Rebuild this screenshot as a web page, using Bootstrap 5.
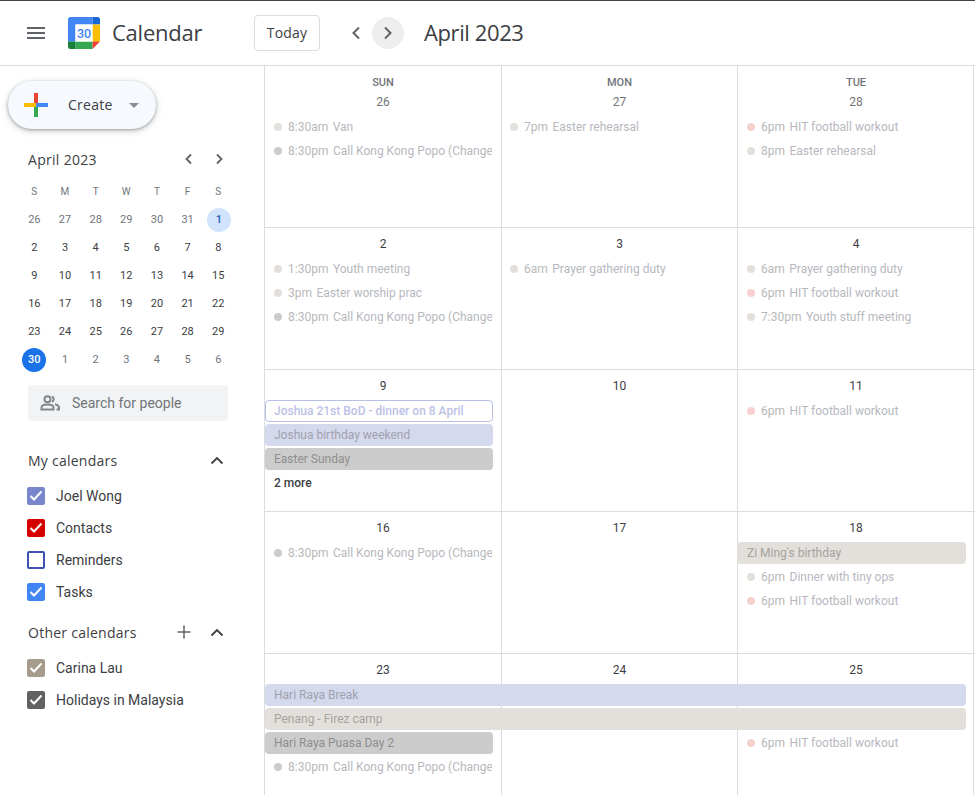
<!DOCTYPE html>
<html lang="en">
<head>
<meta charset="utf-8">
<title>Calendar</title>
<link href="https://cdn.jsdelivr.net/npm/bootstrap@5.3.0/dist/css/bootstrap.min.css" rel="stylesheet">
<style>
html,body{height:795px;overflow:hidden}
body{font-family:Roboto,"Liberation Sans",sans-serif;color:#3c4043;background:#fff;border-top:1px solid #444}
.gs{font-family:"Open Sans",Roboto,sans-serif}
.topbar{height:65px;border-bottom:1px solid #dadce0}
.burger{width:18px;margin:0 23px 0 27px}
.brand-name{font-size:22px;line-height:28px;margin-left:12px;width:142px;letter-spacing:-.25px;padding-bottom:2px}
.today-btn{width:66px;height:36px;padding:0 0 2px;font-size:14px;font-weight:500;color:#3c4043;border:1px solid #dadce0;border-radius:4px;background:#fff;letter-spacing:.2px}
.round-btn{width:32px;height:32px;border-radius:50%;flex:none}
.round-btn.on{background:#eee}
.prev-btn{margin-left:20px}
.cur-month{font-size:22px;line-height:28px;margin-left:20px;letter-spacing:-.4px;padding-bottom:2px}
.main-area{height:729px}
.side{width:265px;flex:none;border-right:1px solid #dadce0;padding-top:15px}
.create-btn{margin-left:8px;width:148px;height:48px;border-radius:24px;background:#f6f9fe;box-shadow:0 1px 3px rgba(60,64,67,.4),0 2px 6px 1px rgba(60,64,67,.18);font-size:14px;font-weight:500;padding-left:15px}
.create-lbl{margin-left:19px;letter-spacing:.25px;padding-bottom:2px}
.caret-dn{width:0;height:0;border:5px solid transparent;border-top-color:#8a8e93;border-bottom:0;margin-left:16px}
.mini-head{margin:20px 0 0 28px;width:198px;height:20px;font-size:14px;font-weight:500;letter-spacing:.3px}
.mini-grid{display:grid;grid-template-columns:repeat(7,30.67px);grid-template-rows:29px;grid-auto-rows:28px;margin:8px 0 0 19px;font-size:11px;font-weight:450;text-align:center}
.mini-grid>span{display:flex;align-items:center;justify-content:center}
.mini-grid>span>b{display:flex;align-items:center;justify-content:center;width:24px;height:24px;border-radius:50%;font-weight:500}
.wd{font-size:10px;color:#70757a}
.out{color:#70757a}
.sel{background:#d2e3fc;color:#185abc;margin-left:1px}
.now{background:#1a73e8;color:#fff}
.people{margin:11px 0 0 28px;width:200px;height:36px;background:#f1f3f4;border-radius:4px;font-size:14px;color:#70757a;padding-left:12px}
.people svg{margin-right:12px}
.sec-head{margin:24px 0 5px 28px;width:196px;height:30px;font-size:14px;font-weight:500;letter-spacing:.25px}
.sec-head.next{margin-top:9px}
.plus-ic{margin-right:18px}
.cal-item{height:32px;padding-left:27px;font-size:14px}
.chk{width:18px;height:18px;border-radius:2px;margin-right:11px;flex:none;display:flex;align-items:center;justify-content:center}
.cal-main{flex:1;min-width:0}
.wk{display:grid;grid-template-columns:236px 236px 237px;grid-template-rows:30px;grid-auto-rows:24px;border-bottom:1px solid #dadce0;height:142px;background:linear-gradient(#dadce0,#dadce0) 236px 0/1px 100% no-repeat,linear-gradient(#dadce0,#dadce0) 472px 0/1px 100% no-repeat,linear-gradient(#dadce0,#dadce0) 708px 0/1px 100% no-repeat;align-content:start}
.wk.first{height:162px;grid-template-rows:50px}
.hd{grid-row:1;font-size:12px;font-weight:450;text-align:center;height:30px;line-height:20px;padding-top:6px;color:#3c4043}
.hd.c2,.hd.c3{padding-left:1px}
.hd.dim{color:#70757a}
.wk.first .hd{height:50px;padding-top:0;line-height:1}
.hd small{display:block;font-size:11px;font-weight:500;color:#70757a;height:21px;line-height:16px;margin:9px 0 0;padding:0}
.ev{height:22px;line-height:22px;font-size:12px;font-weight:450;white-space:nowrap;overflow:hidden;margin:0 8px 2px 0;padding-left:9px;border-radius:4px}
.ev.c3{padding-left:10px}
.ev.timed{display:flex;align-items:center;color:#b7b8c0;margin-right:9px}
.ev.timed i{width:8px;height:8px;border-radius:50%;margin-right:6px;flex:none}
.ev.timed em{font-style:normal;font-weight:400;color:#b8b8b8;margin-right:4.500px}
.tan{background:#e3e0db}.gry{background:#ccc}.pnk{background:#f7d0d0}
.bar-lav{background:#d5d9ee;color:#a0a1ad}
.bar-gry{background:#ccc;color:#8e8e8e}
.bar-tan{background:#e3e0db;color:#a5a4a1}
.bar-out{border:1px solid #b9c0e6;background:#fff;color:#bcc2e6;line-height:20px;padding-left:8px;font-weight:500}
.more{color:#3c4043;background:none;font-weight:500}
.c1{grid-column:1}.c2{grid-column:2}.c3{grid-column:3}.all{grid-column:1/4}
.r2{grid-row:2}.r3{grid-row:3}.r4{grid-row:4}.r5{grid-row:5}
</style>
</head>
<body>
<header class="topbar d-flex align-items-center">
  <svg class="burger" width="18" height="12" viewBox="0 0 18 12"><path d="M0 0h18v2H0zM0 5h18v2H0zM0 10h18v2H0z" fill="#5f6368"/></svg>
  <svg width="32" height="32" viewBox="0 0 32 32">
    <path d="M2.500 0H24.500V7.500H7.500V24.500H0V2.500A2.500 2.500 0 0 1 2.500 0Z" fill="#4285f4"/>
    <path d="M24.500 0H29.500A2.500 2.500 0 0 1 32 2.500V7.500H24.500Z" fill="#1967d2"/>
    <rect x="24.500" y="7.500" width="7.500" height="17" fill="#fbbc04"/>
    <rect x="7.500" y="24.500" width="17" height="7.500" fill="#34a853"/>
    <path d="M0 24.500H7.500V32H2.500A2.500 2.500 0 0 1 0 29.500Z" fill="#188038"/>
    <path d="M24.500 24.500H32L24.500 32Z" fill="#ea4335"/>
    <rect x="7.500" y="7.500" width="17" height="17" fill="#fff"/>
    <text x="16" y="21" text-anchor="middle" font-family="Roboto,sans-serif" font-size="12.500" font-weight="500" fill="#4285f4">30</text>
  </svg>
  <span class="brand-name gs">Calendar</span>
  <button class="today-btn gs" type="button">Today</button>
  <span class="round-btn prev-btn d-flex align-items-center justify-content-center"><svg width="10" height="14" viewBox="0 0 10 14"><path d="M8 1.500 2.500 7 8 12.500" fill="none" stroke="#5f6368" stroke-width="2"/></svg></span>
  <span class="round-btn on d-flex align-items-center justify-content-center"><svg width="10" height="14" viewBox="0 0 10 14"><path d="M2 1.500 7.500 7 2 12.500" fill="none" stroke="#5f6368" stroke-width="2"/></svg></span>
  <span class="cur-month gs">April 2023</span>
</header>
<div class="main-area d-flex">
  <aside class="side">
    <div class="create-btn d-flex align-items-center gs">
      <svg width="26" height="26" viewBox="0 0 26 26"><rect x="11" y="1" width="4" height="11" fill="#ea4335"/><rect x="11" y="13" width="4" height="12" fill="#34a853"/><rect x="1" y="11" width="12" height="4" fill="#fbbc04"/><rect x="13" y="11" width="12" height="4" fill="#4285f4"/></svg>
      <span class="create-lbl">Create</span><span class="caret-dn"></span>
    </div>
    <div class="mini-head d-flex align-items-center justify-content-between gs">
      <span>April 2023</span>
      <span class="d-flex gap-3">
        <svg width="14" height="12" viewBox="0 0 14 12"><path d="M9 1.500 4.500 6 9 10.500" fill="none" stroke="#5f6368" stroke-width="1.800"/></svg>
        <svg width="14" height="12" viewBox="0 0 14 12"><path d="M5 1.500 9.500 6 5 10.500" fill="none" stroke="#5f6368" stroke-width="1.800"/></svg>
      </span>
    </div>
    <div class="mini-grid">
      <span class="wd">S</span><span class="wd">M</span><span class="wd">T</span><span class="wd">W</span><span class="wd">T</span><span class="wd">F</span><span class="wd">S</span>
      <span class="out">26</span><span class="out">27</span><span class="out">28</span><span class="out">29</span><span class="out">30</span><span class="out">31</span><span><b class="sel">1</b></span>
      <span>2</span><span>3</span><span>4</span><span>5</span><span>6</span><span>7</span><span>8</span>
      <span>9</span><span>10</span><span>11</span><span>12</span><span>13</span><span>14</span><span>15</span>
      <span>16</span><span>17</span><span>18</span><span>19</span><span>20</span><span>21</span><span>22</span>
      <span>23</span><span>24</span><span>25</span><span>26</span><span>27</span><span>28</span><span>29</span>
      <span><b class="now">30</b></span><span class="out">1</span><span class="out">2</span><span class="out">3</span><span class="out">4</span><span class="out">5</span><span class="out">6</span>
    </div>
    <div class="people d-flex align-items-center">
      <svg width="20" height="16" viewBox="0 0 20 16"><circle cx="7.500" cy="4.200" r="3" fill="none" stroke="#80868b" stroke-width="2"/><path d="M1.500 14.500v-1.800c0-2 2.700-3.200 6-3.200s6 1.200 6 3.200v1.800z" fill="none" stroke="#80868b" stroke-width="2"/><path d="M12 1.500a3 3 0 0 1 0 5.400M15 9.200c2.200.5 4 1.700 4 3.500v1.800h-2.500" fill="none" stroke="#80868b" stroke-width="2"/></svg>
      <span>Search for people</span>
    </div>
    <div class="sec-head d-flex align-items-center justify-content-between gs">
      <span>My calendars</span>
      <svg width="14" height="9" viewBox="0 0 14 9"><path d="M1.500 7.500 7 2l5.500 5.500" fill="none" stroke="#3c4043" stroke-width="1.800"/></svg>
    </div>
    <div class="cal-item d-flex align-items-center"><span class="chk" style="background:#7986cb"><svg width="14" height="12" viewBox="0 0 14 12"><path d="M1.500 6 5 9.500l7.500-8" fill="none" stroke="#fff" stroke-width="2"/></svg></span>Joel Wong</div>
    <div class="cal-item d-flex align-items-center"><span class="chk" style="background:#d50000"><svg width="14" height="12" viewBox="0 0 14 12"><path d="M1.500 6 5 9.500l7.500-8" fill="none" stroke="#fff" stroke-width="2"/></svg></span>Contacts</div>
    <div class="cal-item d-flex align-items-center"><span class="chk" style="border:2px solid #3f51b5"></span>Reminders</div>
    <div class="cal-item d-flex align-items-center"><span class="chk" style="background:#4285f4"><svg width="14" height="12" viewBox="0 0 14 12"><path d="M1.500 6 5 9.500l7.500-8" fill="none" stroke="#fff" stroke-width="2"/></svg></span>Tasks</div>
    <div class="sec-head next d-flex align-items-center gs">
      <span class="me-auto">Other calendars</span>
      <svg class="plus-ic" width="16" height="16" viewBox="0 0 16 16"><path d="M8 1.500v13M1.500 8h13" stroke="#5f6368" stroke-width="1.500" fill="none"/></svg>
      <svg width="14" height="9" viewBox="0 0 14 9"><path d="M1.500 7.500 7 2l5.500 5.500" fill="none" stroke="#3c4043" stroke-width="1.800"/></svg>
    </div>
    <div class="cal-item d-flex align-items-center"><span class="chk" style="background:#a79b8e"><svg width="14" height="12" viewBox="0 0 14 12"><path d="M1.500 6 5 9.500l7.500-8" fill="none" stroke="#fff" stroke-width="2"/></svg></span>Carina Lau</div>
    <div class="cal-item d-flex align-items-center"><span class="chk" style="background:#616161"><svg width="14" height="12" viewBox="0 0 14 12"><path d="M1.500 6 5 9.500l7.500-8" fill="none" stroke="#fff" stroke-width="2"/></svg></span>Holidays in Malaysia</div>
  </aside>
  <main class="cal-main">
    <section class="wk first">
      <div class="hd c1 dim"><small>SUN</small>26</div><div class="hd c2 dim"><small>MON</small>27</div><div class="hd c3 dim"><small>TUE</small>28</div>
      <div class="ev timed c1 r2"><i class="tan"></i><em>8:30am</em>Van</div>
      <div class="ev timed c1 r3"><i class="gry"></i><em>8:30pm</em>Call Kong Kong Popo (Change</div>
      <div class="ev timed c2 r2"><i class="tan"></i><em>7pm</em>Easter rehearsal</div>
      <div class="ev timed c3 r2"><i class="pnk"></i><em>6pm</em>HIT football workout</div>
      <div class="ev timed c3 r3"><i class="tan"></i><em>8pm</em>Easter rehearsal</div>
    </section>
    <section class="wk">
      <div class="hd c1">2</div><div class="hd c2">3</div><div class="hd c3">4</div>
      <div class="ev timed c1 r2"><i class="tan"></i><em>1:30pm</em>Youth meeting</div>
      <div class="ev timed c1 r3"><i class="tan"></i><em>3pm</em>Easter worship prac</div>
      <div class="ev timed c1 r4"><i class="gry"></i><em>8:30pm</em>Call Kong Kong Popo (Change</div>
      <div class="ev timed c2 r2"><i class="tan"></i><em>6am</em>Prayer gathering duty</div>
      <div class="ev timed c3 r2"><i class="tan"></i><em>6am</em>Prayer gathering duty</div>
      <div class="ev timed c3 r3"><i class="pnk"></i><em>6pm</em>HIT football workout</div>
      <div class="ev timed c3 r4"><i class="tan"></i><em>7:30pm</em>Youth stuff meeting</div>
    </section>
    <section class="wk">
      <div class="hd c1">9</div><div class="hd c2">10</div><div class="hd c3">11</div>
      <div class="ev bar-out c1 r2">Joshua 21st BoD - dinner on 8 April</div>
      <div class="ev bar-lav c1 r3">Joshua birthday weekend</div>
      <div class="ev bar-gry c1 r4">Easter Sunday</div>
      <div class="ev more c1 r5">2 more</div>
      <div class="ev timed c3 r2"><i class="pnk"></i><em>6pm</em>HIT football workout</div>
    </section>
    <section class="wk">
      <div class="hd c1">16</div><div class="hd c2">17</div><div class="hd c3">18</div>
      <div class="ev timed c1 r2"><i class="gry"></i><em>8:30pm</em>Call Kong Kong Popo (Change</div>
      <div class="ev bar-tan c3 r2">Zi Ming's birthday</div>
      <div class="ev timed c3 r3"><i class="tan"></i><em>6pm</em>Dinner with tiny ops</div>
      <div class="ev timed c3 r4"><i class="pnk"></i><em>6pm</em>HIT football workout</div>
    </section>
    <section class="wk">
      <div class="hd c1">23</div><div class="hd c2">24</div><div class="hd c3">25</div>
      <div class="ev bar-lav all r2">Hari Raya Break</div>
      <div class="ev bar-tan all r3">Penang - Firez camp</div>
      <div class="ev bar-gry c1 r4">Hari Raya Puasa Day 2</div>
      <div class="ev timed c1 r5"><i class="gry"></i><em>8:30pm</em>Call Kong Kong Popo (Change</div>
      <div class="ev timed c3 r4"><i class="pnk"></i><em>6pm</em>HIT football workout</div>
    </section>
  </main>
</div>
<script src="https://cdn.jsdelivr.net/npm/bootstrap@5.3.0/dist/js/bootstrap.bundle.min.js"></script>
</body>
</html>
